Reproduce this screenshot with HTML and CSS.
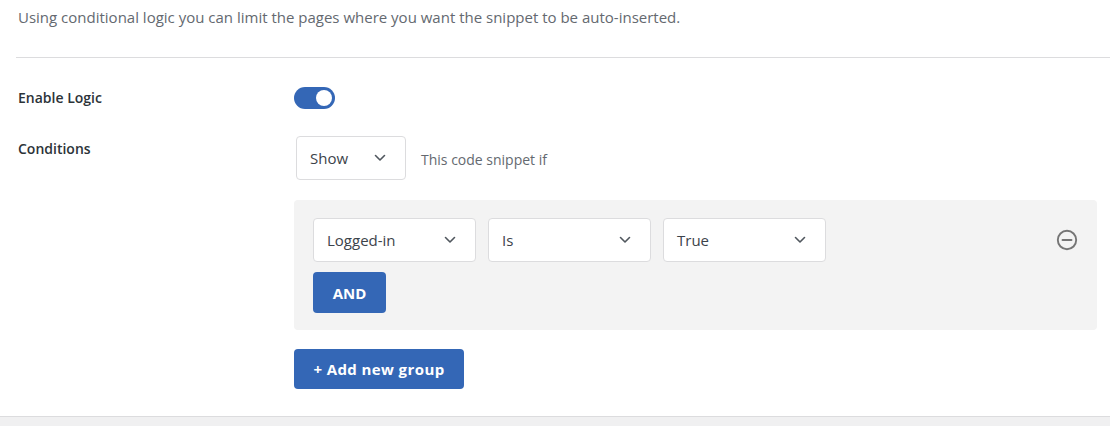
FILE: index.html
```html
<!DOCTYPE html>
<html lang="en">
<head>
<meta charset="utf-8">
<title>Conditional Logic</title>
<link rel="stylesheet" href="styles.css">
</head>
<body>
<div class="panel">
  <p class="desc">Using conditional logic you can limit the pages where you want the snippet to be auto-inserted.</p>
  <div class="rule"></div>
  <div class="row row-toggle">
    <div class="label">Enable Logic</div>
    <div class="field">
      <span class="toggle"><span class="knob"></span></span>
    </div>
  </div>
  <div class="row row-conditions">
    <div class="label label-cond">Conditions</div>
    <div class="field">
      <div class="show-line">
        <div class="select select-show"><span>Show</span><svg class="chev" viewBox="0 0 12 8" width="12" height="8"><path d="M1.5 1.5 L6 6 L10.5 1.5" fill="none" stroke="#50575e" stroke-width="1.6" stroke-linecap="round" stroke-linejoin="round"/></svg></div>
        <span class="hint">This code snippet if</span>
      </div>
      <div class="group">
        <div class="group-main">
          <div class="cond-row">
            <div class="select select-cond"><span>Logged-in</span><svg class="chev" viewBox="0 0 12 8" width="12" height="8"><path d="M1.5 1.5 L6 6 L10.5 1.5" fill="none" stroke="#50575e" stroke-width="1.6" stroke-linecap="round" stroke-linejoin="round"/></svg></div>
            <div class="select select-cond"><span>Is</span><svg class="chev" viewBox="0 0 12 8" width="12" height="8"><path d="M1.5 1.5 L6 6 L10.5 1.5" fill="none" stroke="#50575e" stroke-width="1.6" stroke-linecap="round" stroke-linejoin="round"/></svg></div>
            <div class="select select-cond"><span>True</span><svg class="chev" viewBox="0 0 12 8" width="12" height="8"><path d="M1.5 1.5 L6 6 L10.5 1.5" fill="none" stroke="#50575e" stroke-width="1.6" stroke-linecap="round" stroke-linejoin="round"/></svg></div>
          </div>
          <button class="btn btn-and">AND</button>
        </div>
        <svg class="remove" viewBox="0 0 22 22" width="22" height="22"><circle cx="11" cy="11" r="9.2" fill="none" stroke="#757575" stroke-width="1.9"/><path d="M6.5 11 H15.5" stroke="#757575" stroke-width="1.9" stroke-linecap="round"/></svg>
      </div>
      <button class="btn btn-add">+ Add new group</button>
    </div>
  </div>
</div>
<div class="footer"></div>
</body>
</html>
```
FILE: styles.css
```css
* { box-sizing: border-box; }
html, body { margin: 0; padding: 0; background: #fff; }
body {
  font-family: "Open Sans", "Noto Sans", sans-serif;
  font-size: 14px;
  color: #3c434a;
  width: 1110px;
  height: 426px;
  overflow: hidden;
}
.panel {
  padding: 0 0 27px 16px;
  border-bottom: 1px solid #dcdcde;
}
.desc {
  margin: 0;
  padding: 7px 0 0 2px;
  line-height: 20px;
  color: #646970;
  font-size: 15px;
}
.rule {
  height: 1px;
  background: #dcdcde;
  margin-top: 30px;
}
.row {
  display: flex;
  align-items: flex-start;
}
.row-toggle { margin-top: 29px; }
.row-conditions { margin-top: 27px; }
.label {
  width: 278px;
  flex: none;
  padding-left: 2px;
  font-weight: 600;
  color: #2c3338;
  line-height: 20px;
  padding-top: 1px;
}
.label-cond { padding-top: 3px; }
.field { flex: 1; display: flex; flex-direction: column; align-items: flex-start; }
.toggle {
  display: block;
  width: 41px;
  height: 22px;
  border-radius: 11px;
  background: #3467b6;
  position: relative;
}
.knob {
  position: absolute;
  top: 3px;
  right: 3px;
  width: 16px;
  height: 16px;
  border-radius: 50%;
  background: #fff;
}
.show-line {
  display: flex;
  align-items: center;
  margin-left: 2px;
}
.select {
  display: flex;
  align-items: center;
  justify-content: space-between;
  height: 44px;
  background: #fff;
  border: 1px solid #dcdcde;
  border-radius: 4px;
  padding: 0 19px 0 13px;
  color: #3c434a;
  font-size: 15px;
}
.select-show { width: 110px; }
.chev { display: block; flex: none; }
.hint {
  margin-left: 15px;
  color: #646970;
  font-size: 14px;
  position: relative;
  top: 1px;
}
.group {
  margin-top: 20px;
  width: 803px;
  height: 130px;
  background: #f3f3f3;
  border-radius: 4px;
  padding: 18px 19px 17px 19px;
  display: flex;
  justify-content: space-between;
  align-items: flex-start;
}
.cond-row { display: flex; gap: 12px; }
.select-cond { width: 163px; }
.remove { margin-top: 11px; display: block; }
.btn {
  display: block;
  border: none;
  background: #3467b6;
  color: #fff;
  font-family: inherit;
  font-weight: 700;
  font-size: 15px;
  border-radius: 4px;
  cursor: pointer;
}
.btn-and {
  margin-top: 10px;
  width: 73px;
  height: 41px;
  padding: 0;
}
.btn-add {
  margin-top: 19px;
  width: 170px;
  height: 40px;
  padding: 0;
  letter-spacing: 0.4px;
}
.footer {
  height: 40px;
  background: #f0f0f1;
}
```
